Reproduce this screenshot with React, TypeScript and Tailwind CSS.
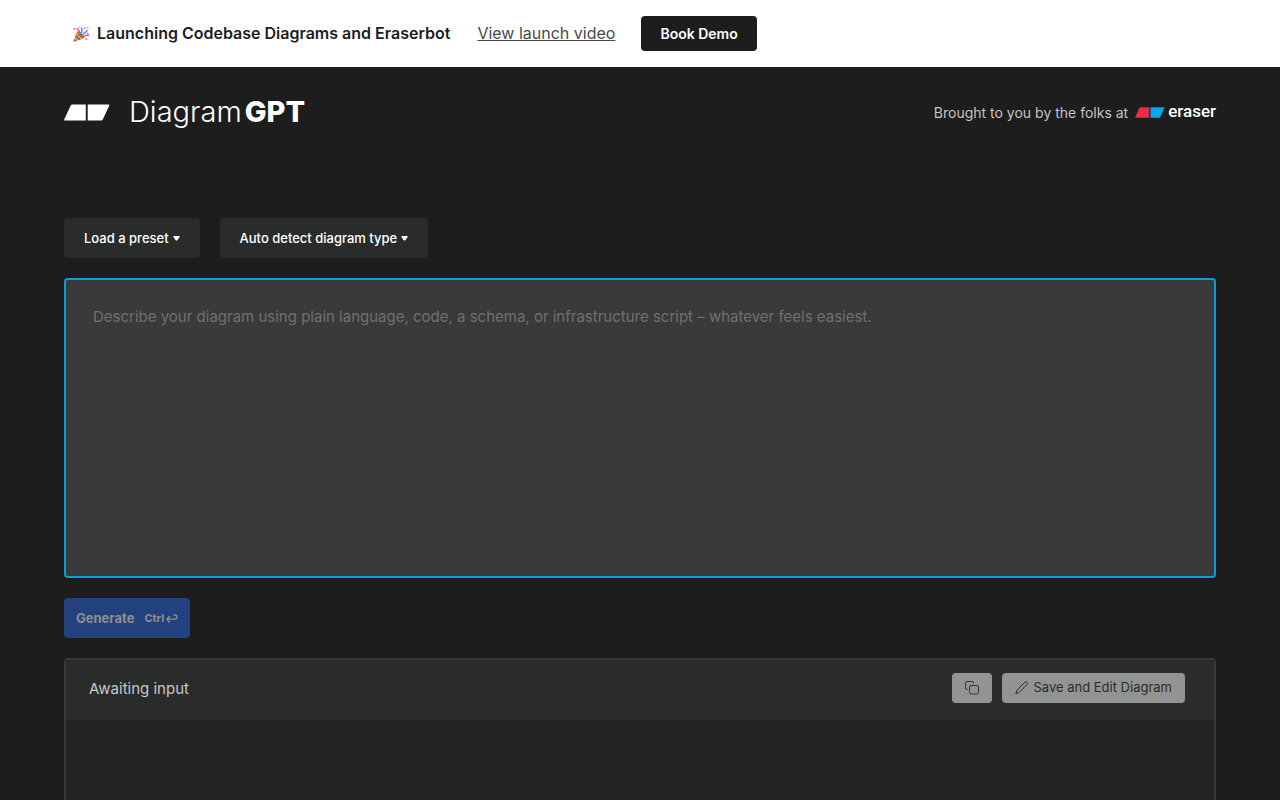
import { useState } from "react";
import { clsx } from "clsx";

interface EraserMarkProps {
  className?: string;
  left?: string;
  right?: string;
}

function EraserMark({ className, left = "#fff", right = "#fff" }: EraserMarkProps) {
  return (
    <svg viewBox="0 0 46 17" className={className} aria-hidden="true">
      <path d="M8.400 .5H21.800V16.500H1Q-.2 16.500 .3 15.300L6.600 1.700Q7.100 .5 8.400 .5Z" fill={left} />
      <path d="M23.700 .5H44.500Q45.700 .5 45.200 1.700L38.900 15.300Q38.400 16.500 37.100 16.500H23.700Z" fill={right} />
    </svg>
  );
}

function PartyPopper() {
  return (
    <svg viewBox="0 0 32 32" className="size-4 shrink-0" role="img" aria-label="Party popper">
      <path d="M1 30 8 11Q18 13 22 24L4 31Q1 32 1 30Z" fill="#f0a531" />
      <path d="m6 18 10 9-4 1-8-7ZM2 26l5 4-3 1-3-1Z" fill="#7268b8" />
      <path d="M9 11q3-2 9 4t4 9q-3 2-9-4T9 11Z" fill="#b5653b" />
      <path d="M15 15c4-4 4-7 2-11M20 17c2-5 7-3 8-8" fill="none" stroke="#39a5ef" strokeWidth="3" strokeLinecap="round" />
      <path d="M12 14c2-5-1-6-4-9M22 21c3-2 5-3 9-2" fill="none" stroke="#f0539b" strokeWidth="3" strokeLinecap="round" />
      <path d="M1 4h3v3H1ZM25 25h3v3h-3Z" fill="#f2569a" />
      <path d="M11 1h3v3h-3ZM28 2h3v3h-3Z" fill="#f4b642" />
      <path d="M22 3h3v3h-3ZM28 14h3v3h-3Z" fill="#e85bb0" />
    </svg>
  );
}

function Caret() {
  return (
    <svg viewBox="0 0 7 5" className="h-[5px] w-[7px]" fill="currentColor" aria-hidden="true">
      <path d="M1 0h5Q7 0 6.600 1L4.300 4.200Q3.500 5 2.700 4.200L.4 1Q0 0 1 0Z" />
    </svg>
  );
}

function ReturnIcon() {
  return (
    <svg viewBox="0 0 12 10" className="h-[10px] w-3" fill="none" stroke="currentColor" strokeWidth="1.300" strokeLinecap="round" strokeLinejoin="round" aria-hidden="true">
      <path d="M3.500 2.500 .8 5.200 3.500 8M.8 5.200H8.900A2.100 2.100 0 0 0 8.900 1H8" />
    </svg>
  );
}

function CopyIcon() {
  return (
    <svg viewBox="0 0 14 14" className="size-3.5" fill="none" stroke="currentColor" strokeWidth="0.900" strokeLinecap="round" strokeLinejoin="round" aria-hidden="true">
      <rect x="4.500" y="4.500" width="9" height="8.500" rx="1.500" />
      <path d="M2.300 8.500H2A1.500 1.500 0 0 1 .5 7V2A1.500 1.500 0 0 1 2 .5h5A1.500 1.500 0 0 1 8.500 2v.3" />
    </svg>
  );
}

function PencilIcon() {
  return (
    <svg viewBox="0 0 14 14" className="size-3.5" fill="none" stroke="currentColor" strokeLinecap="round" strokeLinejoin="round" aria-hidden="true">
      <path d="m1 12.500 1-3.400 8-8a1.300 1.300 0 0 1 1.800 0l.4.400a1.300 1.300 0 0 1 0 1.800l-8 8Z" />
    </svg>
  );
}

function MenuButton({ label }: { label: string }) {
  return (
    <button
      type="button"
      aria-haspopup="menu"
      className="flex h-10 items-center gap-1 rounded bg-[#2a2c2b] px-5 pt-px text-[13px] font-medium text-white hover:bg-[#363837]"
    >
      {label}
      <Caret />
    </button>
  );
}

const outputButton =
  "flex h-[30px] items-center gap-1 rounded bg-[#929493] px-[13px] text-[13px] text-[#2a2c2b]";

export default function App() {
  const [prompt, setPrompt] = useState("");
  const isEmpty = prompt.trim() === "";

  return (
    <div className="flex min-h-screen flex-col bg-[#1d1d1d] font-[Inter,sans-serif]">
      <div className="flex h-[67px] items-center bg-white pl-[73px] text-base text-[#1d1d1d]">
        <PartyPopper />
        <p className="ml-2 pb-px font-semibold">Launching Codebase Diagrams and Eraserbot</p>
        <a href="#launch" className="ml-[27px] pb-px text-[#4a4a4a] underline">
          View launch video
        </a>
        <a
          href="#demo"
          className="ml-[26px] flex h-[35px] items-center rounded bg-[#1d1d1d] px-[19px] text-sm font-semibold text-white"
        >
          Book Demo
        </a>
      </div>

      <header className="flex h-[91px] items-center justify-between px-16">
        <div className="flex items-center gap-[19px]">
          <EraserMark className="h-[17px] w-[46px]" />
          <h1 className="flex items-center gap-[3px] pb-px text-[29px] leading-9 font-light text-white">
            <span>Diagram</span>
            <span className="font-extrabold">GPT</span>
          </h1>
        </div>
        <a href="#eraser" className="flex items-center text-sm text-[#c4c4c4]">
          Brought to you by the folks at
          <EraserMark className="ml-[7px] h-[11px] w-[30px]" left="#ec2c40" right="#00a9e5" />
          <span className="ml-[3px] pb-0.5 font-[Roboto,sans-serif] text-[17px] font-medium text-white">eraser</span>
        </a>
      </header>

      <main className="flex flex-1 flex-col gap-5 px-16 pt-[60px]">
        <div className="flex gap-5">
          <MenuButton label="Load a preset" />
          <MenuButton label="Auto detect diagram type" />
        </div>

        <textarea
          aria-label="Diagram description"
          value={prompt}
          onChange={(e) => setPrompt(e.target.value)}
          placeholder="Describe your diagram using plain language, code, a schema, or infrastructure script – whatever feels easiest."
          className="h-[300px] w-full resize-none rounded border-2 border-[#069fd8] bg-[#3a3a3a] px-[27px] py-[25px] text-[15px] leading-6 text-white outline-none placeholder:text-[#707070]"
        />

        <button
          type="button"
          disabled={isEmpty}
          className={clsx(
            "flex h-10 items-center gap-[10px] self-start rounded px-3 pt-px text-[13px] font-bold",
            isEmpty ? "bg-[#24417f] text-[#8e8e8e]" : "bg-[#2f67e0] text-white",
          )}
        >
          Generate
          <span className="flex items-center gap-0.5 text-[11px]">
            Ctrl
            <ReturnIcon />
          </span>
        </button>

        <section className="flex min-h-[142px] flex-1 flex-col rounded-t border-2 border-b-0 border-[#383838] bg-[#242424]">
          <div className="flex h-[60px] items-center justify-between bg-[#2a2c2b] pr-[29px] pl-[23px]">
            <h2 className="pb-0.5 text-[15px] text-[#c8c8c8]">Awaiting input</h2>
            <div className="flex gap-[10px] pb-1">
              <button type="button" disabled aria-label="Copy diagram" className={clsx(outputButton, "w-10 justify-center")}>
                <CopyIcon />
              </button>
              <button type="button" disabled className={outputButton}>
                <PencilIcon />
                Save and Edit Diagram
              </button>
            </div>
          </div>
        </section>
      </main>
    </div>
  );
}
